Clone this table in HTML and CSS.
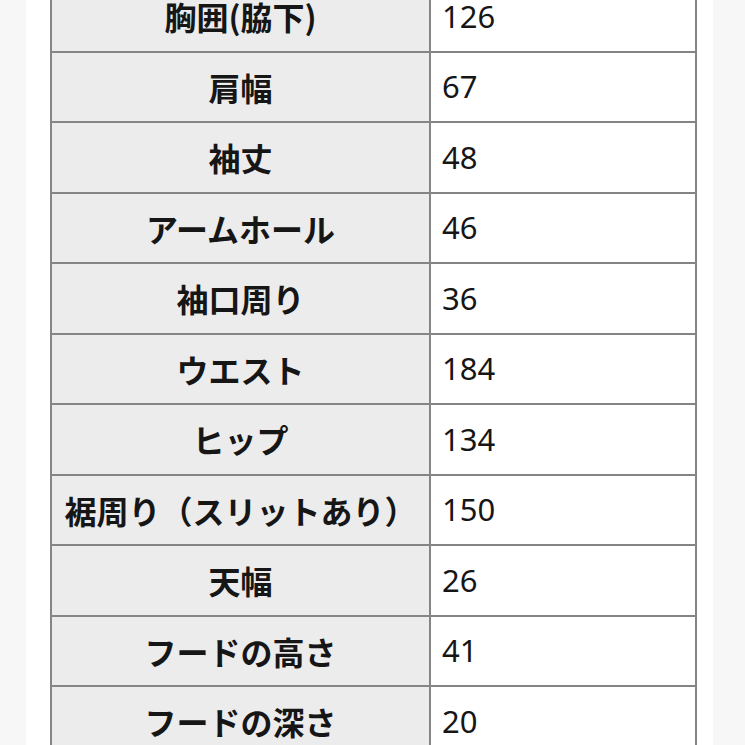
FILE: index.html
```html
<!DOCTYPE html>
<html lang="ja">
<head>
<meta charset="utf-8">
<link rel="stylesheet" href="styles.css">
</head>
<body>
<div class="page">
  <table class="size-table">
    <tbody>
      <tr><th>胸囲(脇下)</th><td>126</td></tr>
      <tr><th>肩幅</th><td>67</td></tr>
      <tr><th>袖丈</th><td>48</td></tr>
      <tr><th>アームホール</th><td>46</td></tr>
      <tr><th>袖口周り</th><td>36</td></tr>
      <tr><th>ウエスト</th><td>184</td></tr>
      <tr><th>ヒップ</th><td>134</td></tr>
      <tr><th>裾周り（スリットあり）</th><td>150</td></tr>
      <tr><th>天幅</th><td>26</td></tr>
      <tr><th>フードの高さ</th><td>41</td></tr>
      <tr><th>フードの深さ</th><td>20</td></tr>
    </tbody>
  </table>
</div>
</body>
</html>
```

FILE: styles.css
```css
html, body {
  margin: 0;
  padding: 0;
  background: #f7f7f7;
  height: 100%;
  overflow: hidden;
}

.page {
  margin-left: 26px;
  width: 687px;
  min-height: 100%;
  background: #ffffff;
  padding: 0 16px 0 24px;
  box-sizing: border-box;
}

.size-table {
  margin-top: -20px;
  width: 647px;
  border-collapse: collapse;
  border: 2px solid #858585;
  font-family: "Noto Sans", "Noto Sans CJK JP", sans-serif;
  color: #161616;
}

.size-table th,
.size-table td {
  border: 2px solid #858585;
  height: 68.5px;
  padding: 0;
  line-height: 1;
}

.size-table th {
  width: 377px;
  background: #ececec;
  font-family: "Noto Sans CJK JP", "Noto Sans", sans-serif;
  font-size: 32px;
  font-weight: 600;
  text-align: center;
}

.size-table td {
  background: #ffffff;
  font-size: 31px;
  font-weight: 400;
  text-align: left;
  padding-left: 11px;
}
```
